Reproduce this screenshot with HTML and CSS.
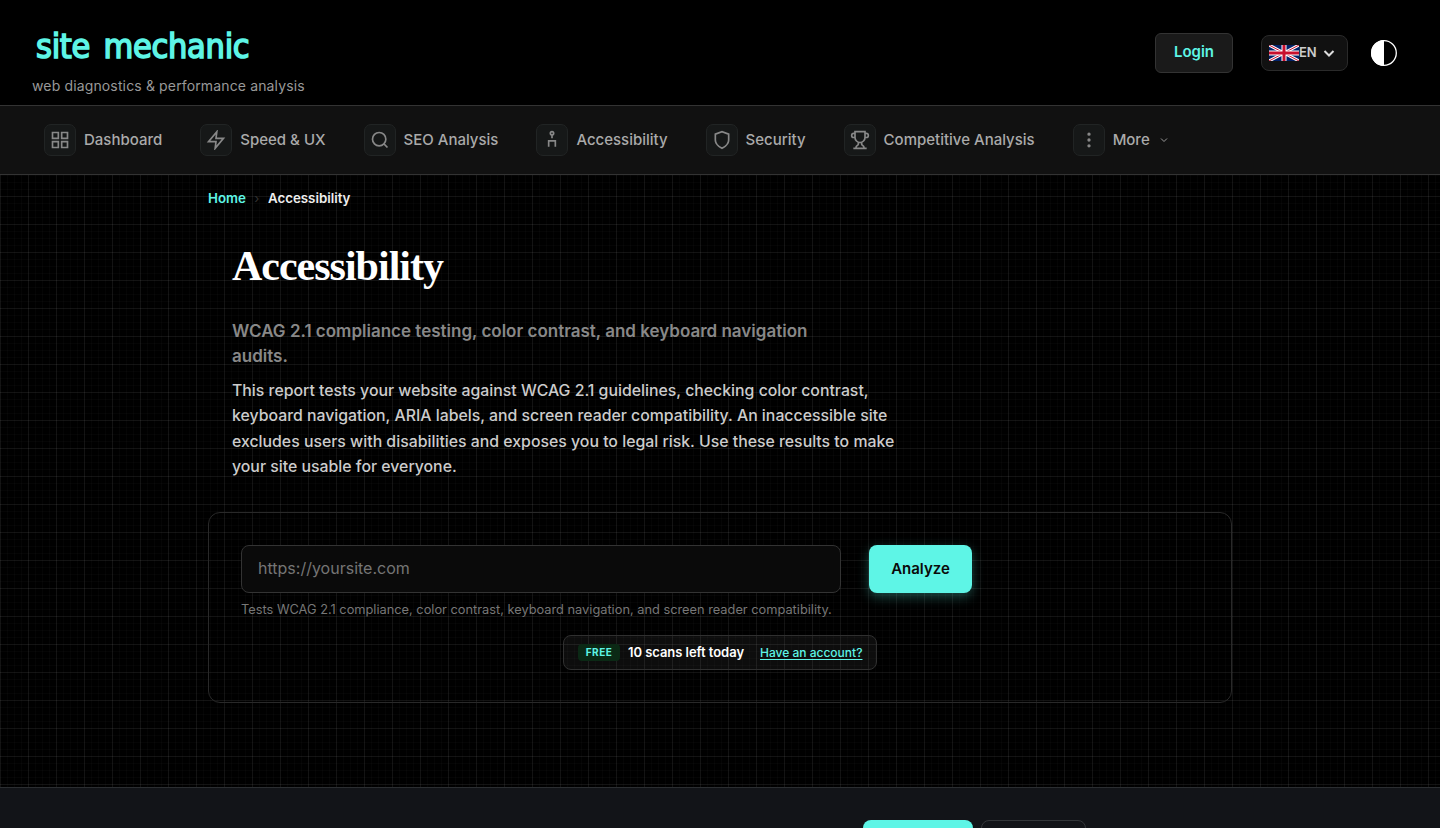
FILE: index.html
```html
<!DOCTYPE html>
<html lang="en">
<head>
<meta charset="UTF-8">
<title>Accessibility - site mechanic</title>
<link rel="stylesheet" href="styles.css">
</head>
<body>
<header class="header">
	<div class="brand">
		<a class="logo" href="#">site mechanic</a>
		<span class="tagline">web diagnostics &amp; performance analysis</span>
	</div>
	<div class="tools">
		<a class="login" href="#">Login</a>
		<button class="lang">
			<svg class="flag" width="30" height="16" viewBox="0 0 60 32" preserveAspectRatio="none">
				<path d="M0 0h60v32H0z" fill="#012169"/>
				<path d="M0 0l60 32M60 0L0 32" stroke="#fff" stroke-width="6"/>
				<path d="M0 0l60 32M60 0L0 32" stroke="#c8102e" stroke-width="2"/>
				<path d="M30 0v32M0 16h60" stroke="#fff" stroke-width="10"/>
				<path d="M30 0v32M0 16h60" stroke="#c8102e" stroke-width="6"/>
			</svg>
			<span>EN</span>
			<svg class="chev" width="12" height="12" viewBox="0 0 12 12"><path d="M1.500 4l4.500 4.500L10.500 4"/></svg>
		</button>
		<button class="contrast">
			<svg width="28" height="28" viewBox="0 0 28 28"><circle cx="14" cy="14" r="12.3" fill="none" stroke="#fff" stroke-width="1.3"/><path d="M14 1a13 13 0 0 0 0 26z" fill="#fff"/></svg>
		</button>
	</div>
</header>

<nav class="nav">
	<a class="item" href="#"><i class="icon"><svg viewBox="0 0 24 24"><path d="M3 3h7v7H3zM14 3h7v7h-7zM14 14h7v7h-7zM3 14h7v7H3z"/></svg></i><span>Dashboard</span></a>
	<a class="item" href="#"><i class="icon"><svg viewBox="0 0 24 24"><path d="M13 2L3 14h9l-1 8 10-12h-9l1-8z"/></svg></i><span>Speed &amp; UX</span></a>
	<a class="item" href="#"><i class="icon"><svg viewBox="0 0 24 24"><circle cx="11" cy="11" r="8"/><path d="M21 21l-4.3-4.3"/></svg></i><span>SEO Analysis</span></a>
	<a class="item" href="#"><i class="icon"><svg viewBox="0 0 24 24"><circle cx="12" cy="4" r="2"/><path d="M12 6v4M8 20v-7h8v7"/></svg></i><span>Accessibility</span></a>
	<a class="item" href="#"><i class="icon"><svg viewBox="0 0 24 24"><path d="M12 22s8-4 8-10V5l-8-3-8 3v7c0 6 8 10 8 10z"/></svg></i><span>Security</span></a>
	<a class="item" href="#"><i class="icon"><svg viewBox="0 0 24 24"><path d="M6 9H4.5a2.5 2.5 0 0 1 0-5H6M18 9h1.5a2.5 2.5 0 0 0 0-5H18M4 22h16M10 14.66V17c0 .55-.47.98-.97 1.21C7.850 18.750 7 20.240 7 22M14 14.660V17c0 .55.47.98.97 1.210C16.150 18.750 17 20.240 17 22M18 2H6v7a6 6 0 0 0 12 0V2z"/></svg></i><span>Competitive Analysis</span></a>
	<a class="item" href="#"><i class="icon"><svg viewBox="0 0 24 24"><circle cx="12" cy="5" r="1"/><circle cx="12" cy="12" r="1"/><circle cx="12" cy="19" r="1"/></svg></i><span>More</span><svg class="caret" viewBox="0 0 8 8"><path d="M1 2.500l3 3 3-3"/></svg></a>
</nav>

<main class="main">
	<div class="crumbs"><a href="#">Home</a><span class="sep">›</span><b>Accessibility</b></div>
	<section class="hero">
		<h1>Accessibility</h1>
		<p class="lead">WCAG 2.1 compliance testing, color contrast, and keyboard navigation audits.</p>
		<p class="desc">This report tests your website against WCAG 2.1 guidelines, checking color contrast, keyboard navigation, ARIA labels, and screen reader compatibility. An inaccessible site excludes users with disabilities and exposes you to legal risk. Use these results to make your site usable for everyone.</p>
	</section>
	<form class="scan">
		<div class="row">
			<input class="url" type="text" placeholder="https://yoursite.com">
			<button class="go" type="button">Analyze</button>
		</div>
		<p class="hint">Tests WCAG 2.1 compliance, color contrast, keyboard navigation, and screen reader compatibility.</p>
		<div class="quota">
			<span class="free">FREE</span>
			<span class="left">10 scans left today</span>
			<a href="#">Have an account?</a>
		</div>
	</form>
</main>

<!-- bottom bar, continues below the fold -->
<div class="bar">
	<span class="bar-main"></span>
	<span class="bar-alt"></span>
</div>
</body>
</html>
```
FILE: styles.css
```css
* {
box-sizing:border-box;
}
body {
margin:0;
height:828px;
overflow:hidden;
display:flex;
flex-direction:column;
font-family:Inter, "Liberation Sans", sans-serif;
color:#fff;
background-color:#000;
/* 28px grid with a finer 7px one under it */
background-image:
linear-gradient(rgba(255,255,255,.055) 1px, transparent 1px),
linear-gradient(90deg, rgba(255,255,255,.055) 1px, transparent 1px),
linear-gradient(rgba(255,255,255,.02) 1px, transparent 1px),
linear-gradient(90deg, rgba(255,255,255,.02) 1px, transparent 1px);
background-size:28px 28px, 28px 28px, 7px 7px, 7px 7px;
}
a {
color:#5ef5e6;
text-decoration:none;
}
button {
font-family:inherit;
padding:0;
}
.header {
flex:none;
height:106px;
padding:0 42px 0 32px;
display:flex;
justify-content:space-between;
background:#000;
border-bottom:1px solid #333;
}
.brand {
display:flex;
flex-direction:column;
padding-top:26px;
}
.logo {
height:40px;
padding-left:4px;
font-family:"DejaVu Sans Condensed", "DejaVu Sans", sans-serif;
font-stretch:condensed;
font-size:34px;
line-height:40px;
letter-spacing:-.3px;
word-spacing:4px;
-webkit-text-stroke:1.5px #5ef5e6;
white-space:nowrap;
}
.tagline {
margin-top:11px;
font-size:14px;
line-height:18px;
letter-spacing:.14px;
color:#999;
}
.tools {
height:105px;
display:flex;
align-items:center;
}
.login {
width:78px;
height:40px;
border:1px solid #333;
border-radius:6px;
background:#1a1a1a;
font-size:15px;
font-weight:600;
line-height:36px;
text-align:center;
}
.lang {
margin-left:28px;
width:87px;
height:36px;
padding-left:7px;
display:flex;
align-items:center;
border:1px solid #2a2a2a;
border-radius:8px;
background:#111;
color:#ccc;
font-size:13px;
font-weight:600;
}
.lang span {
padding-bottom:2px;
}
.chev {
margin-left:6px;
fill:none;
stroke:#ddd;
stroke-width:2;
}
.contrast {
margin-left:22px;
width:28px;
height:28px;
border:0;
background:none;
}
.contrast svg {
display:block;
}
.nav {
flex:none;
height:69px;
padding:0 44px;
display:flex;
align-items:center;
gap:38px;
background:#111;
border-bottom:1px solid #333;
}
.item {
display:flex;
align-items:center;
gap:8px;
font-size:15px;
font-weight:500;
color:#aaa;
white-space:nowrap;
}
.item span {
padding-bottom:2px;
}
.icon {
width:32px;
height:32px;
display:flex;
align-items:center;
justify-content:center;
border:1px solid #212424;
border-radius:7px;
background:#161818;
}
.icon svg {
width:20px;
height:20px;
fill:none;
stroke:#888;
stroke-width:2;
}
.caret {
width:8px;
height:8px;
margin-left:2px;
fill:none;
stroke:#999;
}
.main {
flex:none;
width:1024px;
height:612px;
margin:0 auto;
}
.crumbs {
padding-top:14px;
display:flex;
gap:8.5px;
font-size:13.3px;
font-weight:600;
line-height:18px;
}
.crumbs .sep {
color:#333;
font-weight:400;
}
.crumbs b {
font-weight:600;
color:#eee;
}
.hero {
padding:34px 24px 0;
}
.hero h1 {
margin:0;
font:bold 42px/50px "Liberation Serif", serif;
letter-spacing:-1px;
}
.lead {
width:600px;
margin:28px 0 0;
font-size:17px;
font-weight:600;
line-height:25px;
color:#888;
}
.desc {
width:680px;
margin:9px 0 0;
font-size:15.84px;
font-weight:500;
line-height:25.34px;
color:#ccc;
}
.scan {
height:191px;
margin-top:33px;
padding:32px;
border:1px solid #292929;
border-radius:12px;
}
.row {
display:flex;
gap:28px;
}
.url {
width:600px;
height:48px;
padding:0 16px 2px;
border:1px solid #333;
border-radius:8px;
background:#0a0a0a;
color:#fff;
font:16px Inter, sans-serif;
}
.url::placeholder {
color:#757575;
}
.go {
width:103px;
height:48px;
padding-bottom:1px;
border:0;
border-radius:8px;
background:#5ef5e6;
color:#0a0a0a;
font-size:15px;
font-weight:600;
box-shadow:0 4px 12px rgba(94,245,230,.3);
}
.hint {
margin:8px 0 0;
font-size:12.8px;
line-height:18px;
color:#777;
}
.quota {
width:314px;
height:35px;
margin:16px auto 0;
padding:0 14px;
display:flex;
align-items:center;
border:1px solid #303030;
border-radius:8px;
background:rgba(255,255,255,.05);
font-size:13px;
font-weight:600;
white-space:nowrap;
}
.free {
flex:none;
width:42px;
height:17px;
margin-right:8px;
border-radius:4px;
background:#0b2915;
color:#5ef5e6;
font-size:10px;
font-weight:700;
line-height:17px;
letter-spacing:.5px;
text-align:center;
}
.left {
padding-bottom:1px;
letter-spacing:-.05px;
}
.quota a {
margin-left:16px;
font-size:12px;
font-weight:500;
text-decoration:underline;
text-underline-offset:2px;
}
.bar {
flex:none;
height:80px;
padding:32px 0 0 863px;
display:flex;
gap:8px;
border-top:1px solid #2b2e31;
background:#121418;
}
.bar-main {
width:110px;
height:40px;
border-radius:8px;
background:#5ef5e6;
}
.bar-alt {
width:105px;
height:40px;
border:1px solid #333639;
border-radius:8px;
}
```
